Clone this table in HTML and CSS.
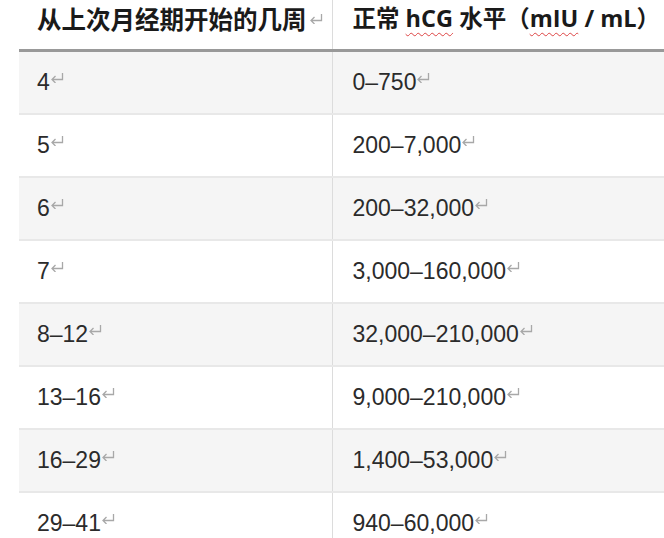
FILE: index.html
```html
<!DOCTYPE html>
<html>
<head>
<meta charset="utf-8">
<link rel="stylesheet" href="styles.css">
</head>
<body>
<div class="wrap">
<table class="tbl">
<colgroup><col class="c1"><col class="c2"></colgroup>
<thead>
<tr>
<th>从上次月经期开始的几周<svg class="ret" viewBox="0 0 14 11"><path d="M12.5 1 V7.5 H2 M5.5 4 L2 7.5 L5.5 11"/></svg></th>
<th>正常 <span class="sp">hCG</span> 水平（<span class="sp">mIU</span> / mL）</th>
</tr>
</thead>
<tbody>
<tr class="alt"><td>4<svg class="ret" viewBox="0 0 14 11"><path d="M12.5 1 V7.5 H2 M5.5 4 L2 7.5 L5.5 11"/></svg></td><td>0–750<svg class="ret" viewBox="0 0 14 11"><path d="M12.5 1 V7.5 H2 M5.5 4 L2 7.5 L5.5 11"/></svg></td></tr>
<tr><td>5<svg class="ret" viewBox="0 0 14 11"><path d="M12.5 1 V7.5 H2 M5.5 4 L2 7.5 L5.5 11"/></svg></td><td>200–7,000<svg class="ret" viewBox="0 0 14 11"><path d="M12.5 1 V7.5 H2 M5.5 4 L2 7.5 L5.5 11"/></svg></td></tr>
<tr class="alt"><td>6<svg class="ret" viewBox="0 0 14 11"><path d="M12.5 1 V7.5 H2 M5.5 4 L2 7.5 L5.5 11"/></svg></td><td>200–32,000<svg class="ret" viewBox="0 0 14 11"><path d="M12.5 1 V7.5 H2 M5.5 4 L2 7.5 L5.5 11"/></svg></td></tr>
<tr><td>7<svg class="ret" viewBox="0 0 14 11"><path d="M12.5 1 V7.5 H2 M5.5 4 L2 7.5 L5.5 11"/></svg></td><td>3,000–160,000<svg class="ret" viewBox="0 0 14 11"><path d="M12.5 1 V7.5 H2 M5.5 4 L2 7.5 L5.5 11"/></svg></td></tr>
<tr class="alt"><td>8–12<svg class="ret" viewBox="0 0 14 11"><path d="M12.5 1 V7.5 H2 M5.5 4 L2 7.5 L5.5 11"/></svg></td><td>32,000–210,000<svg class="ret" viewBox="0 0 14 11"><path d="M12.5 1 V7.5 H2 M5.5 4 L2 7.5 L5.5 11"/></svg></td></tr>
<tr><td>13–16<svg class="ret" viewBox="0 0 14 11"><path d="M12.5 1 V7.5 H2 M5.5 4 L2 7.5 L5.5 11"/></svg></td><td>9,000–210,000<svg class="ret" viewBox="0 0 14 11"><path d="M12.5 1 V7.5 H2 M5.5 4 L2 7.5 L5.5 11"/></svg></td></tr>
<tr class="alt"><td>16–29<svg class="ret" viewBox="0 0 14 11"><path d="M12.5 1 V7.5 H2 M5.5 4 L2 7.5 L5.5 11"/></svg></td><td>1,400–53,000<svg class="ret" viewBox="0 0 14 11"><path d="M12.5 1 V7.5 H2 M5.5 4 L2 7.5 L5.5 11"/></svg></td></tr>
<tr><td>29–41<svg class="ret" viewBox="0 0 14 11"><path d="M12.5 1 V7.5 H2 M5.5 4 L2 7.5 L5.5 11"/></svg></td><td>940–60,000<svg class="ret" viewBox="0 0 14 11"><path d="M12.5 1 V7.5 H2 M5.5 4 L2 7.5 L5.5 11"/></svg></td></tr>
</tbody>
</table>
</div>
</body>
</html>
```
FILE: styles.css
```css
html, body {
  margin: 0;
  padding: 0;
  background: #fff;
  overflow: hidden;
}
.wrap {
  padding-left: 19px;
  width: 720px;
}
.tbl {
  border-collapse: collapse;
  table-layout: fixed;
  width: 700px;
  font-family: "Liberation Sans", "Noto Sans CJK SC", sans-serif;
  color: #2b2b2b;
}
.c1 { width: 313px; }
.c2 { width: 387px; }
.tbl th {
  height: 49px;
  padding: 0 0 0 18px;
  text-align: left;
  vertical-align: top;
  font-family: "Noto Sans CJK SC", "Liberation Sans", sans-serif;
  font-weight: 700;
  font-size: 24.5px;
  line-height: 37px;
  color: #1a1a1a;
  border-bottom: 3px solid #999;
  white-space: nowrap;
}
.tbl th + th {
  padding-left: 20px;
  font-size: 23.5px;
  font-family: "Open Sans", "Noto Sans CJK SC", sans-serif;
}
.tbl th:first-child, .tbl td:first-child {
  border-right: 1px solid #dcdcdc;
}
.tbl td {
  height: 61px;
  padding: 0 0 0 18px;
  font-size: 23px;
  border-bottom: 2px solid #e8e8e8;
  vertical-align: middle;
  white-space: nowrap;
}
.tbl td + td {
  padding-left: 20px;
}
.tbl tr.alt td {
  background: #f5f5f5;
}
.sp {
  text-decoration: underline wavy #d44;
  text-decoration-thickness: 1px;
  text-underline-offset: 5px;
}
.ret {
  width: 14px;
  height: 11px;
  vertical-align: 7px;
  margin-left: 0;
  fill: none;
  stroke: #a8a8a8;
  stroke-width: 1.3;
}
th .ret {
  vertical-align: 5px;
  margin-left: 2px;
}
```
